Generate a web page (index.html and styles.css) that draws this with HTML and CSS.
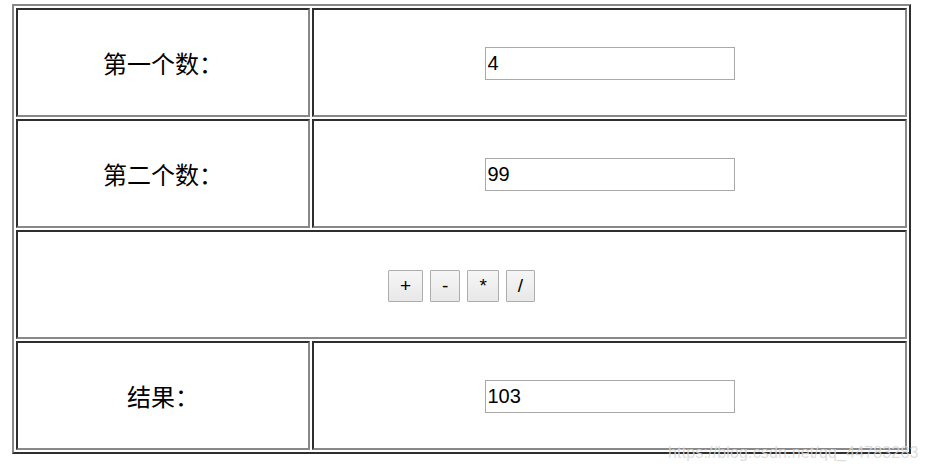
FILE: index.html
```html
<!DOCTYPE html>
<html lang="zh">
<head>
    <meta charset="UTF-8">
    <title>计算器</title>
    <link rel="stylesheet" href="styles.css">
</head>
<body>

<div class="calc">
    <div class="cell label">第一个数：</div>
    <div class="cell"><input type="text" class="num" id="first" value="4"></div>

    <div class="cell label">第二个数：</div>
    <div class="cell"><input type="text" class="num" id="second" value="99"></div>

    <div class="cell ops">
        <button class="op">+</button>
        <button class="op">-</button>
        <button class="op">*</button>
        <button class="op">/</button>
    </div>

    <div class="cell label">结果：</div>
    <div class="cell"><input type="text" class="num" id="result" value="103"></div>
</div>

<div class="watermark">https://blog.csdn.net/qq_44783283</div>

</body>
</html>
```

FILE: styles.css
```css
body {
    margin: 0;
    padding: 4px 0 0 12px;
    background-color: #fff;
    font-family: "Liberation Sans", Arial, sans-serif;
}
.calc {
    display: grid;
    grid-template-columns: 294px 595px;
    grid-auto-rows: 109px;
    gap: 2px;
    padding: 2px;
    width: 899px;
    box-sizing: border-box;
    border: 2px solid;
    border-color: #888 #2e2e2e #2e2e2e #888;
}
.cell {
    display: flex;
    justify-content: center;
    align-items: center;
    border: 2px solid;
    border-color: #2e2e2e #888 #888 #2e2e2e;
}
.cell.ops {
    grid-column: span 2;
    gap: 7px;
}
.label {
    font-family: "Noto Sans CJK SC", sans-serif;
    font-size: 24px;
    color: #000;
}
.num {
    width: 250px;
    height: 33px;
    box-sizing: border-box;
    padding: 1px 2px;
    border: 1px solid #a9a9a9;
    font-family: "Liberation Sans", Arial, sans-serif;
    font-size: 20px;
    color: #000;
    margin-top: 2px;
}
.op {
    height: 32px;
    padding: 0 11px;
    border: 1px solid #adadad;
    border-radius: 1px;
    background: linear-gradient(#f6f6f6, #e8e8e8);
    font-family: "Liberation Sans", Arial, sans-serif;
    font-size: 19px;
    color: #000;
    margin-top: 2px;
}
.watermark {
    position: absolute;
    top: 444px;
    left: 668px;
    font-size: 16px;
    letter-spacing: 0.15px;
    color: rgba(215, 215, 215, 0.85);
    white-space: nowrap;
}
```
